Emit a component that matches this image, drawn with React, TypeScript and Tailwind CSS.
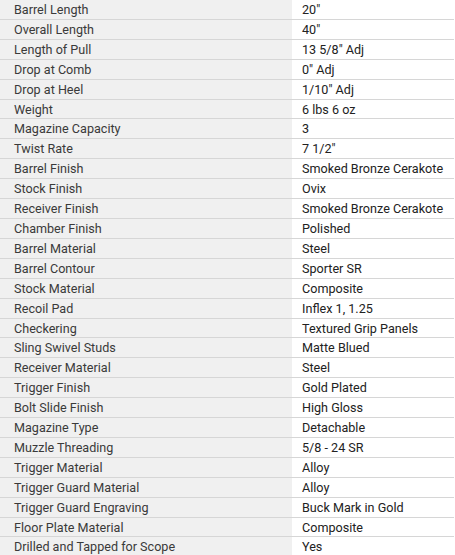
import React from "react";

const rows: [string, string][] = [
  ["Barrel Length", "20\""],
  ["Overall Length", "40\""],
  ["Length of Pull", "13 5/8\" Adj"],
  ["Drop at Comb", "0\" Adj"],
  ["Drop at Heel", "1/10\" Adj"],
  ["Weight", "6 lbs 6 oz"],
  ["Magazine Capacity", "3"],
  ["Twist Rate", "7 1/2\""],
  ["Barrel Finish", "Smoked Bronze Cerakote"],
  ["Stock Finish", "Ovix"],
  ["Receiver Finish", "Smoked Bronze Cerakote"],
  ["Chamber Finish", "Polished"],
  ["Barrel Material", "Steel"],
  ["Barrel Contour", "Sporter SR"],
  ["Stock Material", "Composite"],
  ["Recoil Pad", "Inflex 1, 1.25"],
  ["Checkering", "Textured Grip Panels"],
  ["Sling Swivel Studs", "Matte Blued"],
  ["Receiver Material", "Steel"],
  ["Trigger Finish", "Gold Plated"],
  ["Bolt Slide Finish", "High Gloss"],
  ["Magazine Type", "Detachable"],
  ["Muzzle Threading", "5/8 - 24 SR"],
  ["Trigger Material", "Alloy"],
  ["Trigger Guard Material", "Alloy"],
  ["Trigger Guard Engraving", "Buck Mark in Gold"],
  ["Floor Plate Material", "Composite"],
  ["Drilled and Tapped for Scope", "Yes"],
];

export default function App() {
  return (
    <div
      className="w-[455px] h-[555px] overflow-hidden bg-white"
      style={{ fontFamily: "Roboto, 'Liberation Sans', sans-serif" }}
    >
      <div className="flex flex-col w-[454px]">
        {rows.map(([k, v], i) => (
          <div
            key={i}
            className="flex h-[19.92px] shrink-0 border-b border-[#d6d6d6] text-[12.6px] leading-[19px]"
          >
            <div className="w-[292px] shrink-0 bg-[#f0f0f0] pl-[14px] text-[#3a3a3a]">{k}</div>
            <div className="flex-1 pl-[10px] text-[#222]">{v}</div>
          </div>
        ))}
      </div>
    </div>
  );
}
